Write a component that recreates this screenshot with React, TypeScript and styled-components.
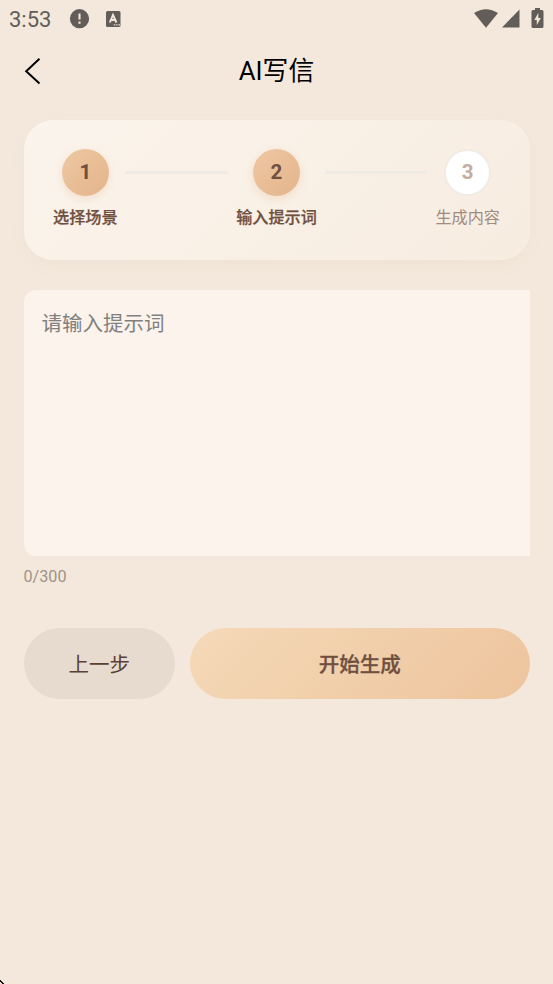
import React from "react";
import styled, { createGlobalStyle } from "styled-components";

const GlobalStyle = createGlobalStyle`
  * { box-sizing: border-box; }
  body {
    margin: 0;
    background: #f4e8dc;
    font-family: Roboto, "Noto Sans CJK SC", sans-serif;
  }
`;

const Screen = styled.main`
  display: flex;
  flex-direction: column;
  height: 984px;
  background: #f4e8dc;
  overflow: hidden;
`;

const StatusBar = styled.div`
  display: flex;
  align-items: center;
  justify-content: space-between;
  height: 38px;
  padding: 0 9px;
  color: #625d58;
`;

const StatusGroup = styled.div<{ $raised?: boolean }>`
  display: flex;
  align-items: center;
  padding-bottom: ${(p) => (p.$raised ? 2 : 0)}px;
`;

const Clock = styled.span`
  width: 60px;
  padding-top: 1px;
  font-size: 22px;
  line-height: 26px;
`;

const StatusIcon = styled.svg<{ $gap?: number }>`
  display: block;
  flex: none;
  margin-left: ${(p) => p.$gap ?? 0}px;
`;

const NavBar = styled.header`
  display: grid;
  grid-template-columns: 60px 1fr 60px;
  align-items: center;
  height: 64px;
`;

const BackButton = styled.button`
  display: flex;
  height: 64px;
  padding: 19px 0 0 23.5px;
  border: 0;
  background: none;
`;

const Title = styled.h1`
  margin: 0;
  padding-top: 2px;
  font-size: 25.8px;
  font-weight: 400;
  line-height: 62px;
  text-align: center;
  color: #000;
`;

const StepsCard = styled.section`
  display: flex;
  align-items: flex-start;
  height: 140.5px;
  margin: 17.5px 23.5px 0;
  padding: 29px 29.5px;
  border-radius: 29px;
  background: linear-gradient(135deg, #fbf4ec, #f7ece0);
  box-shadow: 0 5px 18px rgba(160, 110, 70, 0.04);
`;

const Step = styled.div`
  display: flex;
  flex: none;
  flex-direction: column;
  align-items: center;
`;

const StepNumber = styled.div<{ $active?: boolean }>`
  display: flex;
  align-items: center;
  justify-content: center;
  width: 47px;
  height: 47px;
  border-radius: 50%;
  border: ${(p) => (p.$active ? "0" : "2px solid #f0ebe5")};
  background: ${(p) => (p.$active ? "linear-gradient(135deg, #eec8a2, #e3b48b)" : "#fff")};
  box-shadow: ${(p) => (p.$active ? "0 3px 9px rgba(227, 180, 139, 0.3)" : "none")};
  color: ${(p) => (p.$active ? "#6f4f3f" : "#c4ada0")};
  font-size: 20.5px;
  font-weight: 700;
`;

const StepLabel = styled.span<{ $active?: boolean }>`
  margin-top: 10px;
  font-size: 16.15px;
  line-height: 24px;
  font-weight: ${(p) => (p.$active ? 500 : 400)};
  color: ${(p) => (p.$active ? "#6f4f3f" : "#a18b7e")};
  -webkit-text-stroke: ${(p) => (p.$active ? "0.25px currentColor" : "0")};
`;

const Connector = styled.div`
  flex: 1;
  height: 3px;
  margin: 22px 8px 0 7.8px;
  background: #efeae4;
`;

const Prompt = styled.textarea`
  display: block;
  height: 266px;
  margin: 29.6px 23.5px 0;
  padding: 18px;
  border: 0;
  border-radius: 12px 0 0 12px;
  outline: 0;
  resize: none;
  background: #fbf3ec;
  font: 20.5px/32px Roboto, "Noto Sans CJK SC", sans-serif;
  &::placeholder { color: #808080; opacity: 1; }
`;

const Counter = styled.div`
  margin: 9px 23.5px 0;
  font-size: 16.2px;
  line-height: 24px;
  color: #a39387;
`;

const Actions = styled.div`
  display: flex;
  gap: 15px;
  margin: 39.5px 23.5px 0;
`;

const ActionButton = styled.button<{ $primary?: boolean }>`
  flex: ${(p) => (p.$primary ? "1" : "0 0 151.5px")};
  height: 71px;
  padding: 0 0 2px;
  border: 0;
  border-radius: 36px;
  background: ${(p) => (p.$primary ? "linear-gradient(135deg, #f5d9b8, #edc49d)" : "#e7dbcf")};
  color: ${(p) => (p.$primary ? "#6f4f3f" : "#5a4035")};
  font-family: Roboto, "Noto Sans CJK SC", sans-serif;
  font-size: 20.5px;
  font-weight: ${(p) => (p.$primary ? 500 : 400)};
  -webkit-text-stroke: ${(p) => (p.$primary ? "0.3px currentColor" : "0")};
`;

const CornerMark = styled.svg`
  display: block;
  margin-top: auto;
`;

const steps = [
  { label: "选择场景", active: true },
  { label: "输入提示词", active: true },
  { label: "生成内容", active: false },
];

export default function App() {
  return (
    <Screen>
      <GlobalStyle />
      <StatusBar>
        <StatusGroup>
          <Clock>3:53</Clock>
          <StatusIcon width="21" height="20" viewBox="0 0 21 20">
            <circle cx="10.5" cy="9.7" r="9.6" fill="currentColor" />
            <path d="M10.5 4.5v6M10.5 12.6v2.2" stroke="#f4e8dc" strokeWidth="2.1" />
          </StatusIcon>
          <StatusIcon $gap={16} width="15" height="17" viewBox="0 0 15 17">
            <rect width="14.5" height="16" rx="1.5" fill="currentColor" />
            <path d="M3.8 11.5 7 3.9l3.4 7.6M5 9h4.2" fill="none" stroke="#f4e8dc" strokeWidth="1.9" />
            <path d="M7.8 13.9h1.4M10.2 13.9h1.4M12.6 13.9h1.4" stroke="#f4e8dc" strokeWidth="1.3" />
          </StatusIcon>
        </StatusGroup>
        <StatusGroup $raised>
          <StatusIcon width="24" height="19" viewBox="0 0 24 19">
            <path d="M0 4Q12-3.6 24 4L12 18.7Z" fill="currentColor" />
          </StatusIcon>
          <StatusIcon $gap={4} width="18" height="19" viewBox="0 0 18 19">
            <path d="M17.5.5v18H0Z" fill="currentColor" />
          </StatusIcon>
          <StatusIcon $gap={11} width="13" height="21" viewBox="0 0 13 21">
            <path d="M4 0h5v2h2q1.5 0 1.5 1.5v15q0 1.5-1.5 1.5H2Q.5 20 .5 18.500v-15Q.5 2 2 2h2Z" fill="currentColor" />
            <path d="M7.300 5 3.300 12h2.500v5l4-7H7.300Z" fill="#f4e8dc" />
          </StatusIcon>
        </StatusGroup>
      </StatusBar>
      <NavBar>
        <BackButton aria-label="返回">
          <svg width="18" height="28" viewBox="0 0 18 28">
            <path d="M15.500 1.700 2.200 14.200 15.500 26.500" fill="none" stroke="#000" strokeWidth="2" />
          </svg>
        </BackButton>
        <Title>AI写信</Title>
      </NavBar>
      <StepsCard>
        {steps.map((step, i) => (
          <React.Fragment key={step.label}>
            {i > 0 && <Connector />}
            <Step>
              <StepNumber $active={step.active}>{i + 1}</StepNumber>
              <StepLabel $active={step.active}>{step.label}</StepLabel>
            </Step>
          </React.Fragment>
        ))}
      </StepsCard>
      <Prompt placeholder="请输入提示词" maxLength={300} />
      <Counter>0/300</Counter>
      <Actions>
        <ActionButton>上一步</ActionButton>
        <ActionButton $primary>开始生成</ActionButton>
      </Actions>
      <CornerMark width="4" height="4" viewBox="0 0 4 4">
        <path d="M0 0h1v1h1v1h1v1h1v1H2V3H1V2H0Z" fill="#111" />
      </CornerMark>
    </Screen>
  );
}
